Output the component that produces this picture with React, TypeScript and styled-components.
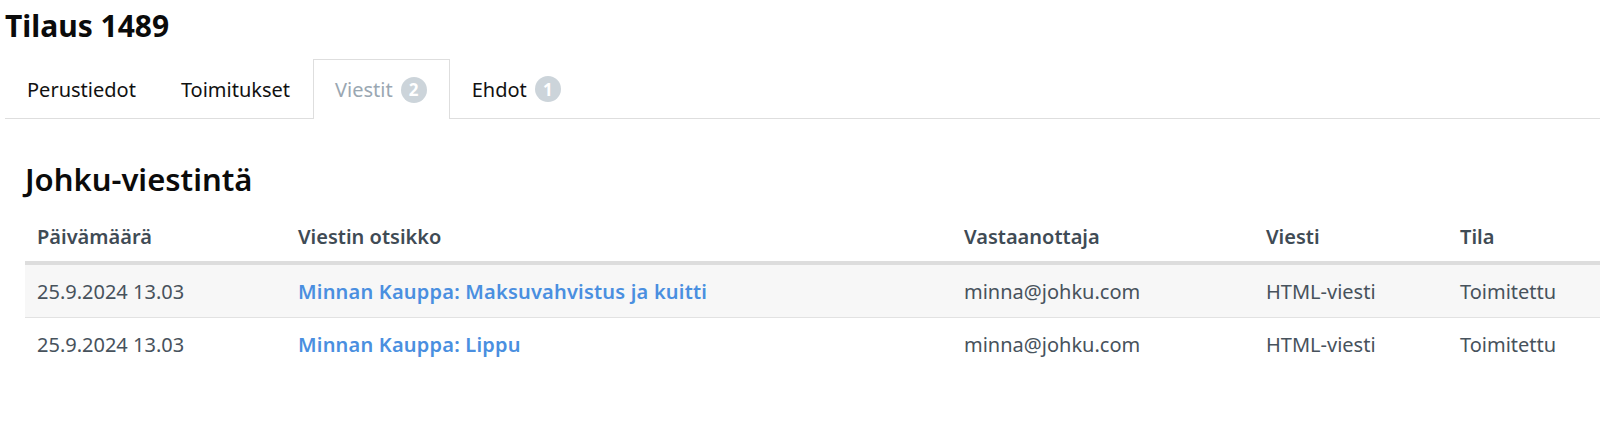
import React from "react";
import styled, { createGlobalStyle } from "styled-components";

const GlobalStyle = createGlobalStyle`
  html, body { margin: 0; padding: 0; background: #ffffff; }
  body { font-family: "Noto Sans", "Open Sans", Arial, sans-serif; color: #111; }
`;

const Page = styled.div`
  padding: 0 0 0 5px;
`;

const Title = styled.h1`
  margin: 0;
  padding-top: 8px;
  font-size: 30px;
  line-height: 36px;
  font-weight: 700;
  color: #0b0b0b;
`;

const TabBar = styled.div`
  display: flex;
  margin-top: 15px;
  border-bottom: 1px solid #dedede;
`;

const Tab = styled.div<{ $active?: boolean }>`
  display: flex;
  align-items: center;
  gap: 8px;
  padding: 0 22px 0 21px;
  font-size: 20px;
  color: ${(p) => (p.$active ? "#9aa7b2" : "#111")};
  border: 1px solid ${(p) => (p.$active ? "#dedede" : "transparent")};
  border-bottom: none;
  background: #fff;
  margin-bottom: ${(p) => (p.$active ? "-1px" : "0")};
  height: ${(p) => (p.$active ? "59px" : "58px")};
`;

const Badge = styled.span`
  display: inline-flex;
  align-items: center;
  justify-content: center;
  width: 26px;
  height: 26px;
  border-radius: 50%;
  background: #ccd4da;
  color: #fff;
  font-size: 17px;
  font-weight: 700;
`;

const Section = styled.section`
  padding: 0 0 0 20px;
`;

const SectionTitle = styled.h2`
  margin: 40px 0 0 0;
  font-size: 31px;
  line-height: 40px;
  font-weight: 600;
  color: #0b0b0b;
`;

const Table = styled.table`
  margin-top: 13px;
  border-collapse: collapse;
  width: 1575px;
  table-layout: fixed;
`;

const Th = styled.th<{ $w: number }>`
  box-sizing: border-box;
  width: ${(p) => p.$w}px;
  text-align: left;
  padding: 0 12px;
  height: 51px;
  font-size: 20px;
  font-weight: 600;
  color: #3f4b55;
  border-bottom: 4px solid #dddddd;
`;

const Row = styled.tr<{ $striped?: boolean }>`
  background: ${(p) => (p.$striped ? "#f7f7f7" : "#ffffff")};
  border-bottom: ${(p) => (p.$striped ? "1px solid #e2e2e2" : "none")};
`;

const Td = styled.td`
  padding: 0 12px;
  height: 52px;
  font-size: 20px;
  color: #47525c;
  white-space: nowrap;
`;

const Link = styled.a`
  color: #4a8fe0;
  font-weight: 600;
  letter-spacing: 0.2px;
  text-decoration: none;
`;

const columns = [
  { label: "Päivämäärä", w: 261 },
  { label: "Viestin otsikko", w: 666 },
  { label: "Vastaanottaja", w: 302 },
  { label: "Viesti", w: 194 },
  { label: "Tila", w: 152 },
];

const rows = [
  { date: "25.9.2024 13.03", subject: "Minnan Kauppa: Maksuvahvistus ja kuitti", to: "minna@johku.com", kind: "HTML-viesti", state: "Toimitettu" },
  { date: "25.9.2024 13.03", subject: "Minnan Kauppa: Lippu", to: "minna@johku.com", kind: "HTML-viesti", state: "Toimitettu" },
];

export default function App() {
  return (
    <Page>
      <GlobalStyle />
      <Title>Tilaus 1489</Title>
      <TabBar>
        <Tab>Perustiedot</Tab>
        <Tab>Toimitukset</Tab>
        <Tab $active>
          Viestit <Badge>2</Badge>
        </Tab>
        <Tab>
          Ehdot <Badge>1</Badge>
        </Tab>
      </TabBar>
      <Section>
        <SectionTitle>Johku-viestintä</SectionTitle>
        <Table>
          <thead>
            <tr>
              {columns.map((c) => (
                <Th key={c.label} $w={c.w}>
                  {c.label}
                </Th>
              ))}
            </tr>
          </thead>
          <tbody>
            {rows.map((r, i) => (
              <Row key={i} $striped={i % 2 === 0}>
                <Td>{r.date}</Td>
                <Td>
                  <Link href="#">{r.subject}</Link>
                </Td>
                <Td>{r.to}</Td>
                <Td>{r.kind}</Td>
                <Td>{r.state}</Td>
              </Row>
            ))}
          </tbody>
        </Table>
      </Section>
    </Page>
  );
}
